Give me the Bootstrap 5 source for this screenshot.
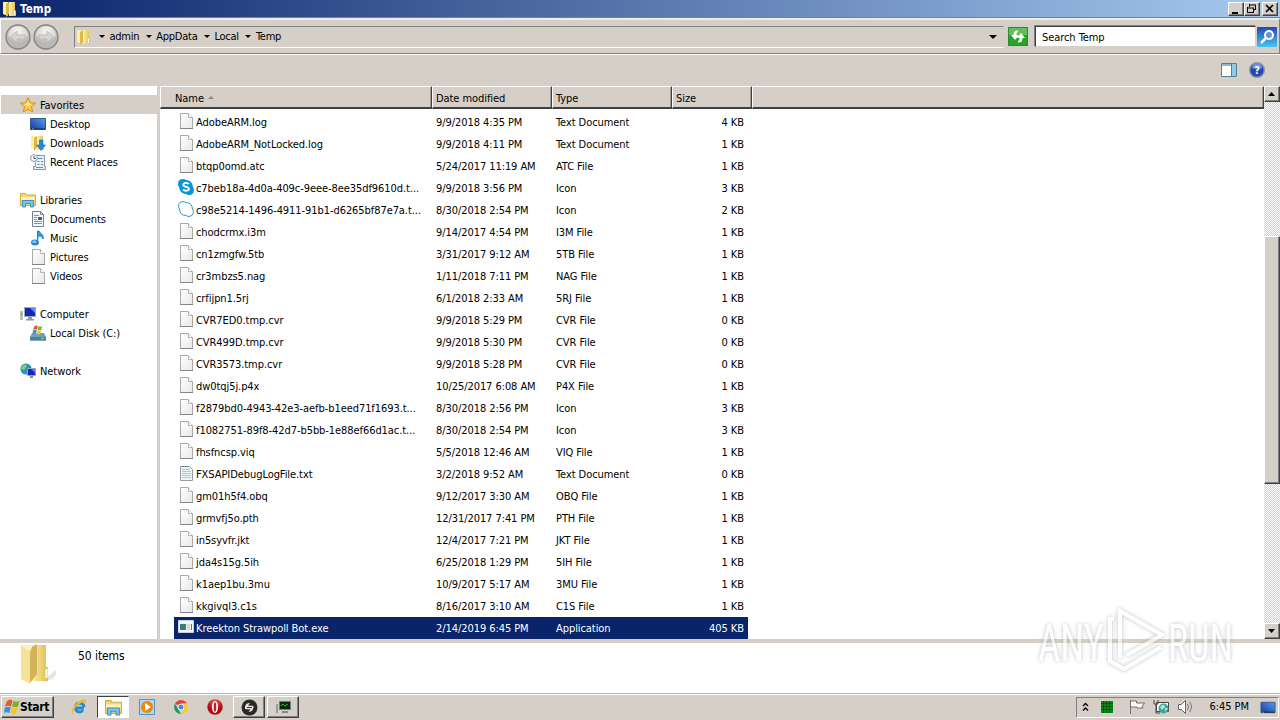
<!DOCTYPE html>
<html lang="en">
<head>
  <meta charset="UTF-8">
  <meta name="viewport" content="width=device-width, initial-scale=1.0">
  <title>Temp</title>
  <link href="https://cdn.jsdelivr.net/npm/bootstrap@5.3.0/dist/css/bootstrap.min.css" rel="stylesheet">
  <style>
    body {
      width: 1280px;
      height: 720px;
      overflow: hidden;
      background: #d5cfc7;
      color: #000;
      font-family: "DejaVu Sans Condensed", "DejaVu Sans", sans-serif;
      font-stretch: condensed;
      font-size: 11px;
      line-height: 14px;
      letter-spacing: -0.07px;
      white-space: nowrap;
    }
    svg { display: block; flex: none; }
    .title-bar {
      height: 18px;
      padding: 0 2px 0 1px;
      background: linear-gradient(90deg, #0a246a, #a6caf0);
      color: #fff;
      font-weight: bold;
      font-size: 11.5px;
      letter-spacing: 0.1px;
    }
    .title-text { margin: 0 auto 0 3px; }
    .raised {
      background: #d4d0c8;
      border: 1px solid;
      border-color: #fff #404040 #404040 #fff;
      box-shadow: inset -1px -1px 0 #808080;
    }
    .win-btn { width: 16px; height: 14px; }
    .win-close { margin-left: 2px; }
    .address-bar {
      height: 36px;
      border: 1px solid;
      border-color: #fff #808080 #808080 #fff;
      border-top: 2px solid #eeece8;
      box-shadow: 0 1px 0 #fff, 0 -1px 0 #808080;
      padding: 0 2px 0 4px;
    }
    .nav-orbs { gap: 2px; }
    .crumbs {
      width: 930px;
      height: 22px;
      margin-left: 15px;
      border: 1px solid;
      border-color: #808080 #d4d0c8 #fff #808080;
    }
    .crumb-path { padding-left: 8px; }
    .crumb-name { margin: 0 6.5px 0 4.5px; letter-spacing: -0.25px; }
    .crumb-arrow {
      width: 0;
      height: 0;
      border: 3px solid transparent;
      border-top-color: #000;
      border-bottom: 0;
    }
    .crumb-drop { margin-right: 6px; }
    .search-box {
      width: 221px;
      height: 21px;
      margin-left: 7px;
      border: 1px solid;
      border-color: #404040 #d4d0c8 #d4d0c8 #404040;
      box-shadow: -1px -1px 0 #808080;
      background: #fff;
      padding: 4px 6px;
    }
    .tool-strip { height: 32px; padding: 0 15px; gap: 12px; }
    .main-area { height: 553px; }
    .side-nav {
      width: 160px;
      background: #fff;
      border-right: 3px solid #d5cfc7;
      padding-top: 9px;
    }
    .side-item { height: 19px; padding: 3px 0 0 30px; }
    .side-head { padding-left: 20px; }
    .side-item svg { margin: 0 4px 3px 0; }
    .side-on { background: #d5cfc7; margin-left: 1px; padding-left: 19px; }
    .list-head { height: 23px; background: #d5cfc7; }
    .head-cell {
      height: 23px;
      padding: 5px 0 0 3px;
      border: 1px solid;
      border-color: #fff #404040 #404040 #fff;
      border-width: 1px 1px 2px 1px;
      box-shadow: inset -1px 0 0 #a09c94;
    }
    .head-name { width: 272px; padding-left: 14px; }
    .head-std { width: 120px; }
    .head-size { width: 80px; }
    .sort-arrow {
      width: 0;
      height: 0;
      margin: 4px 0 0 4px;
      border: 3px solid transparent;
      border-bottom-color: #8a8680;
      border-top: 0;
    }
    .file-list { padding: 2px 0 0 14px; background: #fff; }
    .file-row { width: 574px; height: 22px; padding: 2px 4px 0 4px; }
    .file-on { background: #0a246a; color: #fff; }
    .file-row svg { margin: 0 2px 4px 0; }
    .f-name { width: 240px; }
    .f-date, .f-type { width: 120px; }
    .f-size { width: 68px; text-align: right; }
    .scroll-col {
      width: 16px;
      background: repeating-conic-gradient(#d4d0c8 0 25%, #fff 0 50%) 0 0 / 2px 2px;
    }
    .scroll-btn { height: 16px; }
    .scroll-thumb { height: 248px; margin: 134px 0 139px; }
    .details { height: 50px; margin-top: 4px; background: #fff; }
    .details-text { padding-top: 6px; margin-left: 22px; font-size: 12px; }
    .task-bar {
      height: 27px;
      border-top: 1px solid #b8b4ac;
      box-shadow: inset 0 1px 0 #fff;
      padding: 2px 1px 2px 1px;
    }
    .start-btn { width: 53px; height: 22px; padding-left: 2px; font-weight: bold; font-size: 12px; letter-spacing: -0.3px; }
    .task-list { gap: 2px; margin-left: 9px; }
    .task-item { width: 32px; height: 22px; }
    .task-pressed {
      background: #fff;
      border: 1px solid;
      border-color: #404040 #fff #fff #404040;
    }
    .tray {
      width: 203px;
      height: 21px;
      border: 1px solid;
      border-color: #808080 #fff #fff #808080;
      padding: 0 2px 0 5px;
    }
    .tray-led { margin-left: 11px; }
    .tray-icons { gap: 7px; }
    .tray-clock { margin: 0 11px 0 auto; }
    .watermark { left: 1030px; top: 600px; filter: drop-shadow(0 0 2px #999); opacity: .6; }
  </style>
</head>
<body>
  <svg width="0" height="0" class="position-absolute">
    <defs>
      <linearGradient id="gold" x1="0" x2="1"><stop offset="0" stop-color="#fff0a8"/><stop offset="1" stop-color="#e0bc50"/></linearGradient>
      <linearGradient id="blueScreen" x1="0" x2="1" y1="1" y2="0"><stop offset="0" stop-color="#1038a0"/><stop offset="1" stop-color="#5b9cf0"/></linearGradient>
      <linearGradient id="paper" x1="0" x2="1" y2="1"><stop offset="0" stop-color="#fff"/><stop offset="1" stop-color="#e8e8e8"/></linearGradient>
      <linearGradient id="glass" x1="0" x2="0" y2="1"><stop offset="0" stop-color="#2348b4"/><stop offset="1" stop-color="#45c4f4"/></linearGradient>
      <radialGradient id="orb" cy=".25"><stop offset="0" stop-color="#eee"/><stop offset="1" stop-color="#bab9b6"/></radialGradient>
      <radialGradient id="operaRed" cy=".2"><stop offset="0" stop-color="#f26464"/><stop offset="1" stop-color="#ab0d16"/></radialGradient>
    </defs>
    <symbol id="folder" viewBox="0 0 16 16">
      <path d="M2 1h5v14l-5-2z" fill="#fff0a0"/><path d="M5 3l3-2v12l-3 3z" fill="#dcb850"/><path d="M8 1h6v8l1 1v5H8z" fill="url(#gold)"/><path d="M13 10h1v4h-1z" fill="#fff"/>
    </symbol>
    <symbol id="page" viewBox="0 0 16 16">
      <path d="M2.500.500h8l4 4v11h-12z" fill="url(#paper)" stroke="#a9a9a9"/><path d="M10.500.500v4h4" fill="#fff" stroke="#b3b3b3"/><path d="M2 15.500h13" stroke="#858585"/>
    </symbol>
    <symbol id="text" viewBox="0 0 16 16">
      <path d="M2.500 1.500h9l3 3v11h-12z" fill="#eef5f7" stroke="#929ca0"/><path d="M3 1.500h8" stroke="#666" stroke-dasharray="1 1"/><path d="M4 4.500h8M4 6.500h9M4 8.500h9M4 10.500h9M4 12.500h9" stroke="#a9cbd8"/>
    </symbol>
    <symbol id="skype" viewBox="0 0 16 16">
      <path d="M0 5Q0 0 5 0q2 0 3 1 6 0 7 7 1 1.500 1 3.500-.5 4.500-5 4.500-2 0-3-1-6 0-7-7Q0 7 0 5" fill="#0796d8"/><path d="M10.800 5.200C10 3.400 5.300 3.400 5.300 6c0 2.400 5.600 1.500 5.600 3.800 0 2.300-4.700 2.500-5.800.5" fill="none" stroke="#fff" stroke-width="1.900"/>
    </symbol>
    <symbol id="skypeLine" viewBox="0 0 16 16">
      <path d="M.600 5Q.500.800 5 .600q2 0 3 1 6 0 6.500 6.400 1 1.500 1 3.500-.500 3.800-4.500 4-2 0-3-1-6 0-6.500-6.500Q.600 7 .600 5z" fill="#fff" stroke="#3a93c0"/>
    </symbol>
    <symbol id="app" viewBox="0 0 16 16">
      <path d="M.5 1.500h15v12H.5z" fill="#f4f4f4" stroke="#ccd2da"/><path d="M2 5h6v6H2z" fill="#35807a"/><path d="M9 6h3M9 8h3M9 10h3" stroke="#bbb"/><path d="M13.500 5v6" stroke="#4b74aa"/>
    </symbol>
    <symbol id="star" viewBox="0 0 16 16">
      <path d="M8 .8l2.200 4.900 5.300.5-4 3.500 1.200 5.300L8 12.200 3.300 15l1.200-5.300-4-3.500 5.300-.5z" fill="#ffc83c" stroke="#e08820"/><path d="M8 3l1.300 3.500 3 .4L8 9.500 4 7l3-.5z" fill="#ffe894"/>
    </symbol>
    <symbol id="desktop" viewBox="0 0 16 16">
      <path d="M.5 2.500h15v11H.5z" fill="url(#blueScreen)" stroke="#30568c"/><path d="M1 13h14" stroke="#1b2740"/><path d="M2 13h2" stroke="#6c6"/>
    </symbol>
    <symbol id="downloads" viewBox="0 0 16 16">
      <use href="#folder" x="-1"/><path d="M9.500 5h3.500v5h2.500L11 15.500 6.500 10h3z" fill="#2889d8" stroke="#196bb0" stroke-width=".6"/>
    </symbol>
    <symbol id="recent" viewBox="0 0 16 16">
      <path d="M4.500 1.500h10v11h1v3h-12v-3h2z" fill="#e8eff5" stroke="#8299a8"/><path d="M7.500 4.500h5M7.500 7.500h2M11 7.500h2M7.500 10.500h2M11 10.500h2M6 13.500h7" stroke="#5591b8"/><circle cx="4" cy="4" r="3.400" fill="#fff" stroke="#8a98a2"/><path d="M4 2v2.500h2" fill="none" stroke="#456"/>
    </symbol>
    <symbol id="library" viewBox="0 0 16 16">
      <path d="M.5 1.500h5l1 1.500h9v10.500H.5z" fill="#f5d873" stroke="#d0ad45"/><path d="M1 5h14v3H1z" fill="#fff3b8"/><path d="M2.500 15V8.500h11V15h-3v-3.500h-5V15z" fill="#7cc7ee" stroke="#3b91c6"/>
    </symbol>
    <symbol id="document" viewBox="0 0 16 16">
      <path d="M2.500.5h8l3 3v12h-11z" fill="#fafdff" stroke="#71808c"/><path d="M10.500.5v3h3" fill="none" stroke="#71808c"/><path d="M4 4.500h5M4 6.500h3M4 8.500h3M4 10.500h8M4 12.500h8" stroke="#7d93aa"/><path d="M8 6h4v3H8z" fill="#3a5f94"/>
    </symbol>
    <symbol id="music" viewBox="0 0 16 16">
      <path d="M7.500 12V1h1.500c1 3 5 3 4 8-.5-2-2-3-4-3" fill="#2a9be6" stroke="#1d80c6"/><ellipse cx="5" cy="12.500" rx="4" ry="3" fill="#2487d4"/><ellipse cx="4.300" cy="11.800" rx="2" ry="1.200" fill="#8acffa"/>
    </symbol>
    <symbol id="computer" viewBox="0 0 16 16">
      <path d="M0 5h3v9H0z" fill="#b8c2b6"/><path d="M1 7h1v2H1z" fill="#4a4"/><path d="M4.500 1.500h11v9h-11z" fill="#1528b0" stroke="#9ba9ba"/><path d="M10 2h5v5z" fill="#668af0"/><path d="M8 11h4v2h2v1.500H6V13h2z" fill="#909cad"/>
    </symbol>
    <symbol id="flag" viewBox="0 0 16 16">
      <path d="M3 2q3-2 5.500-.5L7 7.500Q4 6 1 7.500z" fill="#e85a22"/><path d="M9.500 2q3 1.600 6-.5L14 7.500q-3 1.500-6-.2z" fill="#73b52c"/><path d="M.8 8.500q3-1.500 6-.3L5.300 14q-3-1.500-5.300.2z" fill="#3d8ee0"/><path d="M7.800 8.500q3 1.500 6 0L12 14.500q-3 1.500-5.800-.5z" fill="#fac129"/>
    </symbol>
    <symbol id="disk" viewBox="0 0 16 16">
      <path d="M2 8h12l2 4v3.500H0V12z" fill="#749eb5"/><path d="M0 12h16v3.500H0z" fill="#4d8099"/><path d="M11 13.500h3" stroke="#7e7"/><use href="#flag" x="2" y="0" width="11" height="10"/>
    </symbol>
    <symbol id="network" viewBox="0 0 16 16">
      <circle cx="6" cy="6" r="5.600" fill="#2b8fbf"/><path d="M2 3q4-3 5 0L4 7 1 6zM7 7l3 0-2 4z" fill="#7ccf85"/><path d="M7.500 5.500h8v7h-8z" fill="#1528b0" stroke="#94a6bc"/><path d="M11 6h4v4z" fill="#5478e8"/><path d="M10 13h3v2h-3z" fill="#889"/>
    </symbol>
    <symbol id="orbLeft" viewBox="0 0 26 26">
      <circle cx="13" cy="13" r="12" fill="url(#orb)" stroke="#85837f" stroke-width="1.300"/><path d="M3 12a10 10 0 0 1 20 0q-10 3-20 0" fill="#fff" opacity=".35"/><path d="M6 13l6-6v4h8v4h-8v4z" fill="#d6d5d3" stroke="#bebcb9"/>
    </symbol>
  </svg>

  <div class="title-bar d-flex align-items-center">
    <svg width="16" height="16"><use href="#folder"/></svg>
    <span class="title-text">Temp</span>
    <div class="raised win-btn"><svg width="13" height="12"><path d="M3 9h6v2H3z"/></svg></div>
    <div class="raised win-btn"><svg width="13" height="12"><path d="M4.500 1v3M4 2h7M10.500 2v5M9 6.500h2M2.500 4v6M2 5h7M8.500 5v5M2 9.500h7" fill="none" stroke="#000"/></svg></div>
    <div class="raised win-btn win-close"><svg width="13" height="12"><path d="M3 2l7 7M10 2L3 9" stroke="#000" stroke-width="1.600"/></svg></div>
  </div>

  <div class="address-bar d-flex align-items-center">
    <div class="nav-orbs d-flex">
      <svg width="26" height="26"><use href="#orbLeft"/></svg>
      <svg width="26" height="26"><use href="#orbLeft" transform="translate(26 0) scale(-1 1)"/></svg>
    </div>
    <div class="crumbs d-flex align-items-center">
      <svg width="16" height="16"><use href="#folder"/></svg>
      <div id="crumbPath" class="crumb-path d-flex align-items-center flex-grow-1"></div>
      <svg width="8" height="4" class="crumb-drop"><path d="M0 0h8L4 4z"/></svg>
    </div>
    <svg width="20" height="19" class="ms-1"><rect x=".5" y=".5" width="19" height="18" fill="#27a527" stroke="#2f8a37"/><path d="M1 1h18v7H1z" fill="#62bf58"/><path d="M10 3.500Q5.500 3 5.500 8H3l4 5 4-5H8.500Q8.300 5.500 10 5zM10 15.500q4.500.5 4.500-4.500H17l-4-5-4 5h2.500q.2 2.500-1.500 3z" fill="#fff"/></svg>
    <div class="search-box">Search Temp</div>
    <svg width="20" height="20" class="ms-auto"><rect width="20" height="20" rx="1" fill="url(#glass)"/><circle cx="12" cy="8" r="4" fill="#5f93e8" stroke="#fff" stroke-width="2"/><path d="M9 11l-5 5" stroke="#fff" stroke-width="2.500"/></svg>
  </div>

  <div class="tool-strip d-flex align-items-center justify-content-end">
    <svg width="16" height="14"><path d="M.5.500h15v13H.5z" fill="#fff" stroke="#55809c"/><path d="M1 2h14" stroke="#8cb9d0" stroke-width="2"/><path d="M10 1h5v12h-5z" fill="#8fcbe6"/><path d="M10.500 1v12" stroke="#55809c"/></svg>
    <svg width="16" height="16" viewBox="0 0 16 16"><circle cx="8" cy="8" r="7.300" fill="#2549b4" stroke="#8d93a0" stroke-width="1.400"/><path d="M3 6a5 5 0 0 1 10 0q-5 2-10 0" fill="#6d90e2"/><text x="8" y="12" fill="#fff" font-size="11" font-weight="bold" text-anchor="middle">?</text></svg>
  </div>

  <div class="main-area d-flex">
    <div class="side-nav" id="sideNav"></div>
    <div class="flex-grow-1 bg-white">
      <div class="list-head d-flex">
        <div class="head-cell head-name d-flex">Name<span class="sort-arrow"></span></div>
        <div class="head-cell head-std">Date modified</div>
        <div class="head-cell head-std">Type</div>
        <div class="head-cell head-size">Size</div>
        <div class="head-cell flex-grow-1"></div>
      </div>
      <div class="file-list" id="fileList"></div>
    </div>
    <div class="scroll-col">
      <div class="raised scroll-btn"><svg width="14" height="14"><path d="M3 9h7L6.500 5z"/></svg></div>
      <div class="raised scroll-thumb"></div>
      <div class="raised scroll-btn"><svg width="14" height="14"><path d="M3 5h7L6.500 9z"/></svg></div>
    </div>
  </div>

  <div class="details d-flex">
    <svg width="40" height="44" class="ms-3" viewBox="0 0 40 44">
      <path d="M30 35l10-8q2 10-14 12z" fill="#bbb" opacity=".4"/>
      <path d="M19 2h11v21l2 2v13H15z" fill="url(#gold)"/><path d="M13 5l8-4v30l-7 9z" fill="#d3b35a"/><path d="M5 2l9 7v32l-9-5z" fill="#f6e296"/><path d="M5 2h12l-3 7z" fill="#fff0b4"/><path d="M29.500 26h2v9h-2z" fill="#fff"/>
    </svg>
    <div class="details-text">50 items</div>
  </div>

  <div class="task-bar d-flex align-items-center">
    <div class="raised start-btn d-flex align-items-center"><svg width="16" height="16"><use href="#flag"/></svg>Start</div>
    <div class="task-list d-flex">
      <div class="task-item d-flex align-items-center justify-content-center"><svg width="16" height="16"><path d="M13 9H4.500c.3 5 6 4.800 7.300 2M4.500 8c.5-5 8.500-5 8.500 0" fill="none" stroke="#208bd8" stroke-width="2.800"/><path d="M2 15.500C-3 11 9-1 14 .8c2 .8 1.500 2.200 0 4.200C15-1 0 9 2 15.500" fill="#e9ba37"/></svg></div>
      <div class="task-item task-pressed d-flex align-items-center justify-content-center"><svg width="17" height="17"><use href="#library"/></svg></div>
      <div class="task-item d-flex align-items-center justify-content-center"><svg width="16" height="16"><path d="M.5.500h15v15H.5z" fill="#acd7f5" stroke="#5098cc"/><circle cx="8" cy="8" r="6" fill="#ee8610"/><path d="M6 4l6 4-6 4z" fill="#fff"/></svg></div>
      <div class="task-item d-flex align-items-center justify-content-center"><svg width="14" height="14" viewBox="0 0 14 14"><path d="M7 7L1 3.500A7 7 0 0 1 13 3.500H7z" fill="#df4335"/><path d="M1 3.500L4 8.700 7 14A7 7 0 0 1 1 3.500" fill="#239a55"/><path d="M13 3.500A7 7 0 0 1 7 14l3-6-1-4.500z" fill="#f7ca35"/><circle cx="7" cy="7" r="3.200" fill="#fff"/><circle cx="7" cy="7" r="2.500" fill="#4389ec"/></svg></div>
      <div class="task-item d-flex align-items-center justify-content-center"><svg width="16" height="16"><circle cx="8" cy="8" r="7.700" fill="url(#operaRed)"/><ellipse cx="8" cy="8" rx="3" ry="6" fill="#fff"/><ellipse cx="8" cy="8" rx="1.300" ry="4.800" fill="#b5222a"/></svg></div>
      <div class="task-item raised d-flex align-items-center justify-content-center"><svg width="17" height="17"><circle cx="8.500" cy="8.500" r="8" fill="#292929"/><path d="M4 8q.5-4 5-4l-2 2.500 5.500.5q.500 5.500-5 6l2-2.500L4 10z" fill="#e6e6e6"/><path d="M6 8.500h5" stroke="#333"/></svg></div>
      <div class="task-item raised d-flex align-items-center justify-content-center"><svg width="17" height="15"><path d="M4.500 1.500h11v8h-11z" fill="#092b0c" stroke="#777"/><path d="M6 6l2-2 2 2 3-2" fill="none" stroke="#24bc35"/><path d="M1 4h2v9H1z" fill="#999"/><path d="M7 11h6v2H7z" fill="#888"/></svg></div>
    </div>
    <div class="tray d-flex align-items-center ms-auto">
      <svg width="8" height="11"><path d="M1 4L3.500 1.500 6 4M1 8.500L3.500 6 6 8.500" fill="none" stroke="#000" stroke-width="1.300"/></svg>
      <svg width="12" height="12" class="tray-led"><path d="M0 0h12v12H0z" fill="#0a8c12"/><path d="M0 2.500h12M0 5.500h12M0 8.500h12M2.500 0v12M5.500 0v12M8.500 0v12" stroke="#065209" stroke-width=".8"/></svg>
      <div class="tray-icons d-flex align-items-center ms-3">
        <svg width="17" height="16"><path d="M1.500 15V1M1.500 2h6v2h8l-2.500 3 1 2H8V8H1.500" fill="#fff" stroke="#6e6e6e"/></svg>
        <svg width="17" height="16"><path d="M3.500 3.500h12v9h-12z" fill="#fff" stroke="#444"/><path d="M1 1v4h4V1M3 5v9h4" fill="none" stroke="#444"/><circle cx="10.500" cy="9.500" r="5" fill="#36a69c"/><path d="M7 8q4-5 5 0l-3 3zM12 9h3l-3 4z" fill="#b3e5cf"/></svg>
        <svg width="17" height="16"><path d="M1.500 5.500h3l4-4v13l-4-4h-3z" fill="#fff" stroke="#666"/><path d="M10.500 5q2 3 0 6M12.500 3q4 5 0 10" fill="none" stroke="#777"/></svg>
      </div>
      <span class="tray-clock">6:45 PM</span>
      <svg width="16" height="15"><use href="#desktop"/></svg>
    </div>
  </div>

  <svg width="240" height="90" class="watermark position-absolute">
    <g fill="#fff" font-family="Roboto, sans-serif" font-size="52">
      <text x="8" y="61" textLength="66" lengthAdjust="spacingAndGlyphs">ANY</text>
      <text x="138" y="61" textLength="65" lengthAdjust="spacingAndGlyphs">RUN</text>
    </g>
    <path d="M90 58V11l42 24-35 20M84 19h-4v42l14 8 37-22" fill="none" stroke="#fff" stroke-width="4"/>
  </svg>

  <script src="https://cdn.jsdelivr.net/npm/bootstrap@5.3.0/dist/js/bootstrap.bundle.min.js"></script>
  <script>
    // icon, label, extra class; null leaves an empty line
    const places = [
      ['star', 'Favorites', 'side-head side-on'],
      ['desktop', 'Desktop', ''],
      ['downloads', 'Downloads', ''],
      ['recent', 'Recent Places', ''],
      null,
      ['library', 'Libraries', 'side-head'],
      ['document', 'Documents', ''],
      ['music', 'Music', ''],
      ['page', 'Pictures', ''],
      ['page', 'Videos', ''],
      null,
      ['computer', 'Computer', 'side-head'],
      ['disk', 'Local Disk (C:)', ''],
      null,
      ['network', 'Network', 'side-head']
    ];

    const files = [
      ['page', 'AdobeARM.log', '9/9/2018 4:35 PM', 'Text Document', 4],
      ['page', 'AdobeARM_NotLocked.log', '9/9/2018 4:11 PM', 'Text Document', 1],
      ['page', 'btqp0omd.atc', '5/24/2017 11:19 AM', 'ATC File', 1],
      ['skype', 'c7beb18a-4d0a-409c-9eee-8ee35df9610d.t...', '9/9/2018 3:56 PM', 'Icon', 3],
      ['skypeLine', 'c98e5214-1496-4911-91b1-d6265bf87e7a.t...', '8/30/2018 2:54 PM', 'Icon', 2],
      ['page', 'chodcrmx.i3m', '9/14/2017 4:54 PM', 'I3M File', 1],
      ['page', 'cn1zmgfw.5tb', '3/31/2017 9:12 AM', '5TB File', 1],
      ['page', 'cr3mbzs5.nag', '1/11/2018 7:11 PM', 'NAG File', 1],
      ['page', 'crfijpn1.5rj', '6/1/2018 2:33 AM', '5RJ File', 1],
      ['page', 'CVR7ED0.tmp.cvr', '9/9/2018 5:29 PM', 'CVR File', 0],
      ['page', 'CVR499D.tmp.cvr', '9/9/2018 5:30 PM', 'CVR File', 0],
      ['page', 'CVR3573.tmp.cvr', '9/9/2018 5:28 PM', 'CVR File', 0],
      ['page', 'dw0tqj5j.p4x', '10/25/2017 6:08 AM', 'P4X File', 1],
      ['page', 'f2879bd0-4943-42e3-aefb-b1eed71f1693.t...', '8/30/2018 2:56 PM', 'Icon', 3],
      ['page', 'f1082751-89f8-42d7-b5bb-1e88ef66d1ac.t...', '8/30/2018 2:54 PM', 'Icon', 3],
      ['page', 'fhsfncsp.viq', '5/5/2018 12:46 AM', 'VIQ File', 1],
      ['text', 'FXSAPIDebugLogFile.txt', '3/2/2018 9:52 AM', 'Text Document', 0],
      ['page', 'gm01h5f4.obq', '9/12/2017 3:30 AM', 'OBQ File', 1],
      ['page', 'grmvfj5o.pth', '12/31/2017 7:41 PM', 'PTH File', 1],
      ['page', 'in5syvfr.jkt', '12/4/2017 7:21 PM', 'JKT File', 1],
      ['page', 'jda4s15g.5ih', '6/25/2018 1:29 PM', '5IH File', 1],
      ['page', 'k1aep1bu.3mu', '10/9/2017 5:17 AM', '3MU File', 1],
      ['page', 'kkgivql3.c1s', '8/16/2017 3:10 AM', 'C1S File', 1],
      ['app', 'Kreekton Strawpoll Bot.exe', '2/14/2019 6:45 PM', 'Application', 405]
    ];

    const icon = name => `<svg width="16" height="16"><use href="#${name}"/></svg>`;

    document.getElementById('crumbPath').innerHTML = ['admin', 'AppData', 'Local', 'Temp'].map(name =>
      `<span class="crumb-arrow"></span><span class="crumb-name">${name}</span>`
    ).join('');

    document.getElementById('sideNav').innerHTML = places.map(p => p
      ? `<div class="side-item d-flex align-items-center ${p[2]}">${icon(p[0])}${p[1]}</div>`
      : '<div class="side-item"></div>'
    ).join('');

    document.getElementById('fileList').innerHTML = files.map(f => `
      <div class="file-row d-flex align-items-center ${f[0] === 'app' ? 'file-on' : ''}">
        ${icon(f[0])}
        <span class="f-name">${f[1]}</span>
        <span class="f-date">${f[2]}</span>
        <span class="f-type">${f[3]}</span>
        <span class="f-size">${f[4]} KB</span>
      </div>`).join('');
  </script>
</body>
</html>
